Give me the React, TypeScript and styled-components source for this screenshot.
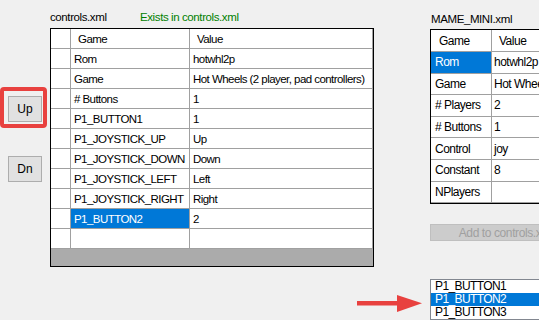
import React from 'react';
import styled, { createGlobalStyle } from 'styled-components';

const GlobalStyle = createGlobalStyle`
  html, body {
    margin: 0;
    padding: 0;
    background: #f0f0f0;
  }
  body {
    font-family: "Liberation Sans", Arial, sans-serif;
    font-size: 11px;
    color: #000;
  }
`;

type Row = { name: string; value: string; selected?: boolean };

const controlRows: Row[] = [
  { name: 'Rom', value: 'hotwhl2p' },
  { name: 'Game', value: 'Hot Wheels (2 player, pad controllers)' },
  { name: '# Buttons', value: '1' },
  { name: 'P1_BUTTON1', value: '1' },
  { name: 'P1_JOYSTICK_UP', value: 'Up' },
  { name: 'P1_JOYSTICK_DOWN', value: 'Down' },
  { name: 'P1_JOYSTICK_LEFT', value: 'Left' },
  { name: 'P1_JOYSTICK_RIGHT', value: 'Right' },
  { name: 'P1_BUTTON2', value: '2', selected: true },
  { name: '', value: '' },
];

const miniRows: Row[] = [
  { name: 'Rom', value: 'hotwhl2p', selected: true },
  { name: 'Game', value: 'Hot Wheels (2 player, pad controllers)' },
  { name: '# Players', value: '2' },
  { name: '# Buttons', value: '1' },
  { name: 'Control', value: 'joy' },
  { name: 'Constant', value: '8' },
  { name: 'NPlayers', value: '' },
];

const listItems = ['P1_BUTTON1', 'P1_BUTTON2', 'P1_BUTTON3'];

export default function App() {
  return (
    <>
      <GlobalStyle />
      <Window>
        <SideButtons>
          <Highlight>
            <NavButton>Up</NavButton>
          </Highlight>
          <DownButton>Dn</DownButton>
        </SideButtons>

        <ControlsPanel>
          <Caption>
            <FileName>controls.xml</FileName>
            <Status>Exists in controls.xml</Status>
          </Caption>
          <ControlsGrid>
            <GridRow $cols="20px 119px 1fr" $height={20}>
              <Cell $pad={0} />
              <Cell $pad={7}>Game</Cell>
              <Cell $pad={7}>Value</Cell>
            </GridRow>
            {controlRows.map((r, i) => (
              <GridRow key={i} $cols="20px 119px 1fr" $height={20}>
                <Cell $pad={0} />
                <Cell $pad={3} $selected={r.selected}>{r.name}</Cell>
                <Cell $pad={3}>{r.value}</Cell>
              </GridRow>
            ))}
          </ControlsGrid>
        </ControlsPanel>

        <MiniPanel>
          <Caption>
            <MiniName>MAME_MINI.xml</MiniName>
          </Caption>
          <MiniGrid>
            <GridRow $cols="61px 1fr" $height={22} $big>
              <Cell $pad={8}>Game</Cell>
              <Cell $pad={7}>Value</Cell>
            </GridRow>
            {miniRows.map((r, i) => (
              <GridRow key={i} $cols="61px 1fr" $height={21.6} $big>
                <Cell $pad={4} $selected={r.selected}>{r.name}</Cell>
                <Cell $pad={2}>{r.value}</Cell>
              </GridRow>
            ))}
          </MiniGrid>
          <AddButton disabled>Add to controls.xml</AddButton>
          <ListBox>
            {listItems.map(item => (
              <ListItem key={item} $selected={item === 'P1_BUTTON2'}>
                {item}
              </ListItem>
            ))}
          </ListBox>
        </MiniPanel>

        <Arrow width="65" height="17" viewBox="0 0 65 17">
          <rect x="0" y="6" width="44" height="4.5" fill="#e8413f" />
          <polygon points="40,0 65,8.3 40,17" fill="#e8413f" />
        </Arrow>
      </Window>
    </>
  );
}

const Window = styled.div`
  position: relative;
  display: flex;
  width: 539px;
  height: 320px;
  overflow: hidden;
  background: #f0f0f0;
`;

const SideButtons = styled.div`
  width: 50px;
  flex-shrink: 0;
  display: flex;
  flex-direction: column;
  align-items: flex-start;
  padding-top: 87px;
  box-sizing: border-box;
`;

const Highlight = styled.div`
  border: 4px solid #e8413f;
  border-radius: 4px;
  padding: 5px 1px 2px 4px;
`;

const NavButton = styled.button`
  width: 34px;
  height: 26px;
  padding: 0;
  background: #e1e1e1;
  border: 1px solid #adadad;
  font-family: "Liberation Sans", Arial, sans-serif;
  font-size: 12px;
  color: #000;
`;

const DownButton = styled(NavButton)`
  margin: 28px 0 0 8px;
`;

const ControlsPanel = styled.div`
  width: 324px;
  flex-shrink: 0;
  display: flex;
  flex-direction: column;
  padding-top: 8px;
`;

const MiniPanel = styled.div`
  flex-shrink: 0;
  display: flex;
  flex-direction: column;
  align-items: flex-start;
  margin-left: 56px;
  padding-top: 10px;
`;

const Caption = styled.div`
  display: flex;
  height: 18px;
  line-height: 18px;
  font-size: 11.5px;
  letter-spacing: -0.4px;
  white-space: nowrap;
`;

const FileName = styled.span`
  width: 90px;
`;

const Status = styled.span`
  color: #008000;
`;

const MiniName = styled.span`
  padding-left: 1px;
`;

const ControlsGrid = styled.div`
  margin-top: 2px;
  height: 239px;
  box-sizing: border-box;
  border: 1px solid #000;
  background: #ababab;
`;

const MiniGrid = styled.div`
  margin-top: 1px;
  width: 160px;
  border: 1px solid #000;
  background: #fff;
`;

const GridRow = styled.div<{ $cols: string; $height: number; $big?: boolean }>`
  display: grid;
  grid-template-columns: ${p => p.$cols};
  height: ${p => p.$height}px;
  font-size: ${p => (p.$big ? '12px' : '11.5px')};
  letter-spacing: ${p => (p.$big ? '-0.5px' : '-0.55px')};
`;

const Cell = styled.div<{ $pad: number; $selected?: boolean }>`
  display: flex;
  align-items: center;
  box-sizing: border-box;
  padding-left: ${p => p.$pad}px;
  border-right: 1px solid #a0a0a0;
  border-bottom: 1px solid #a0a0a0;
  background: ${p => (p.$selected ? '#0078d7' : '#fff')};
  color: ${p => (p.$selected ? '#fff' : '#000')};
  white-space: nowrap;
  overflow: hidden;
`;

const AddButton = styled.button`
  margin-top: 20px;
  width: 152px;
  height: 21px;
  padding: 0;
  background: #cccccc;
  border: 1px solid #bfbfbf;
  color: #a0a0a0;
  font-family: "Liberation Sans", Arial, sans-serif;
  font-size: 12px;
  letter-spacing: -0.4px;
  white-space: nowrap;
`;

const ListBox = styled.div`
  margin-top: 38px;
  width: 130px;
  height: 45px;
  border: 1px solid #828790;
  background: #fff;
`;

const ListItem = styled.div<{ $selected?: boolean }>`
  height: 13px;
  line-height: 13px;
  padding-left: 4px;
  font-size: 12px;
  letter-spacing: -0.6px;
  background: ${p => (p.$selected ? '#0078d7' : 'transparent')};
  color: ${p => (p.$selected ? '#fff' : '#000')};
`;

const Arrow = styled.svg`
  position: absolute;
  left: 357px;
  top: 295px;
`;
